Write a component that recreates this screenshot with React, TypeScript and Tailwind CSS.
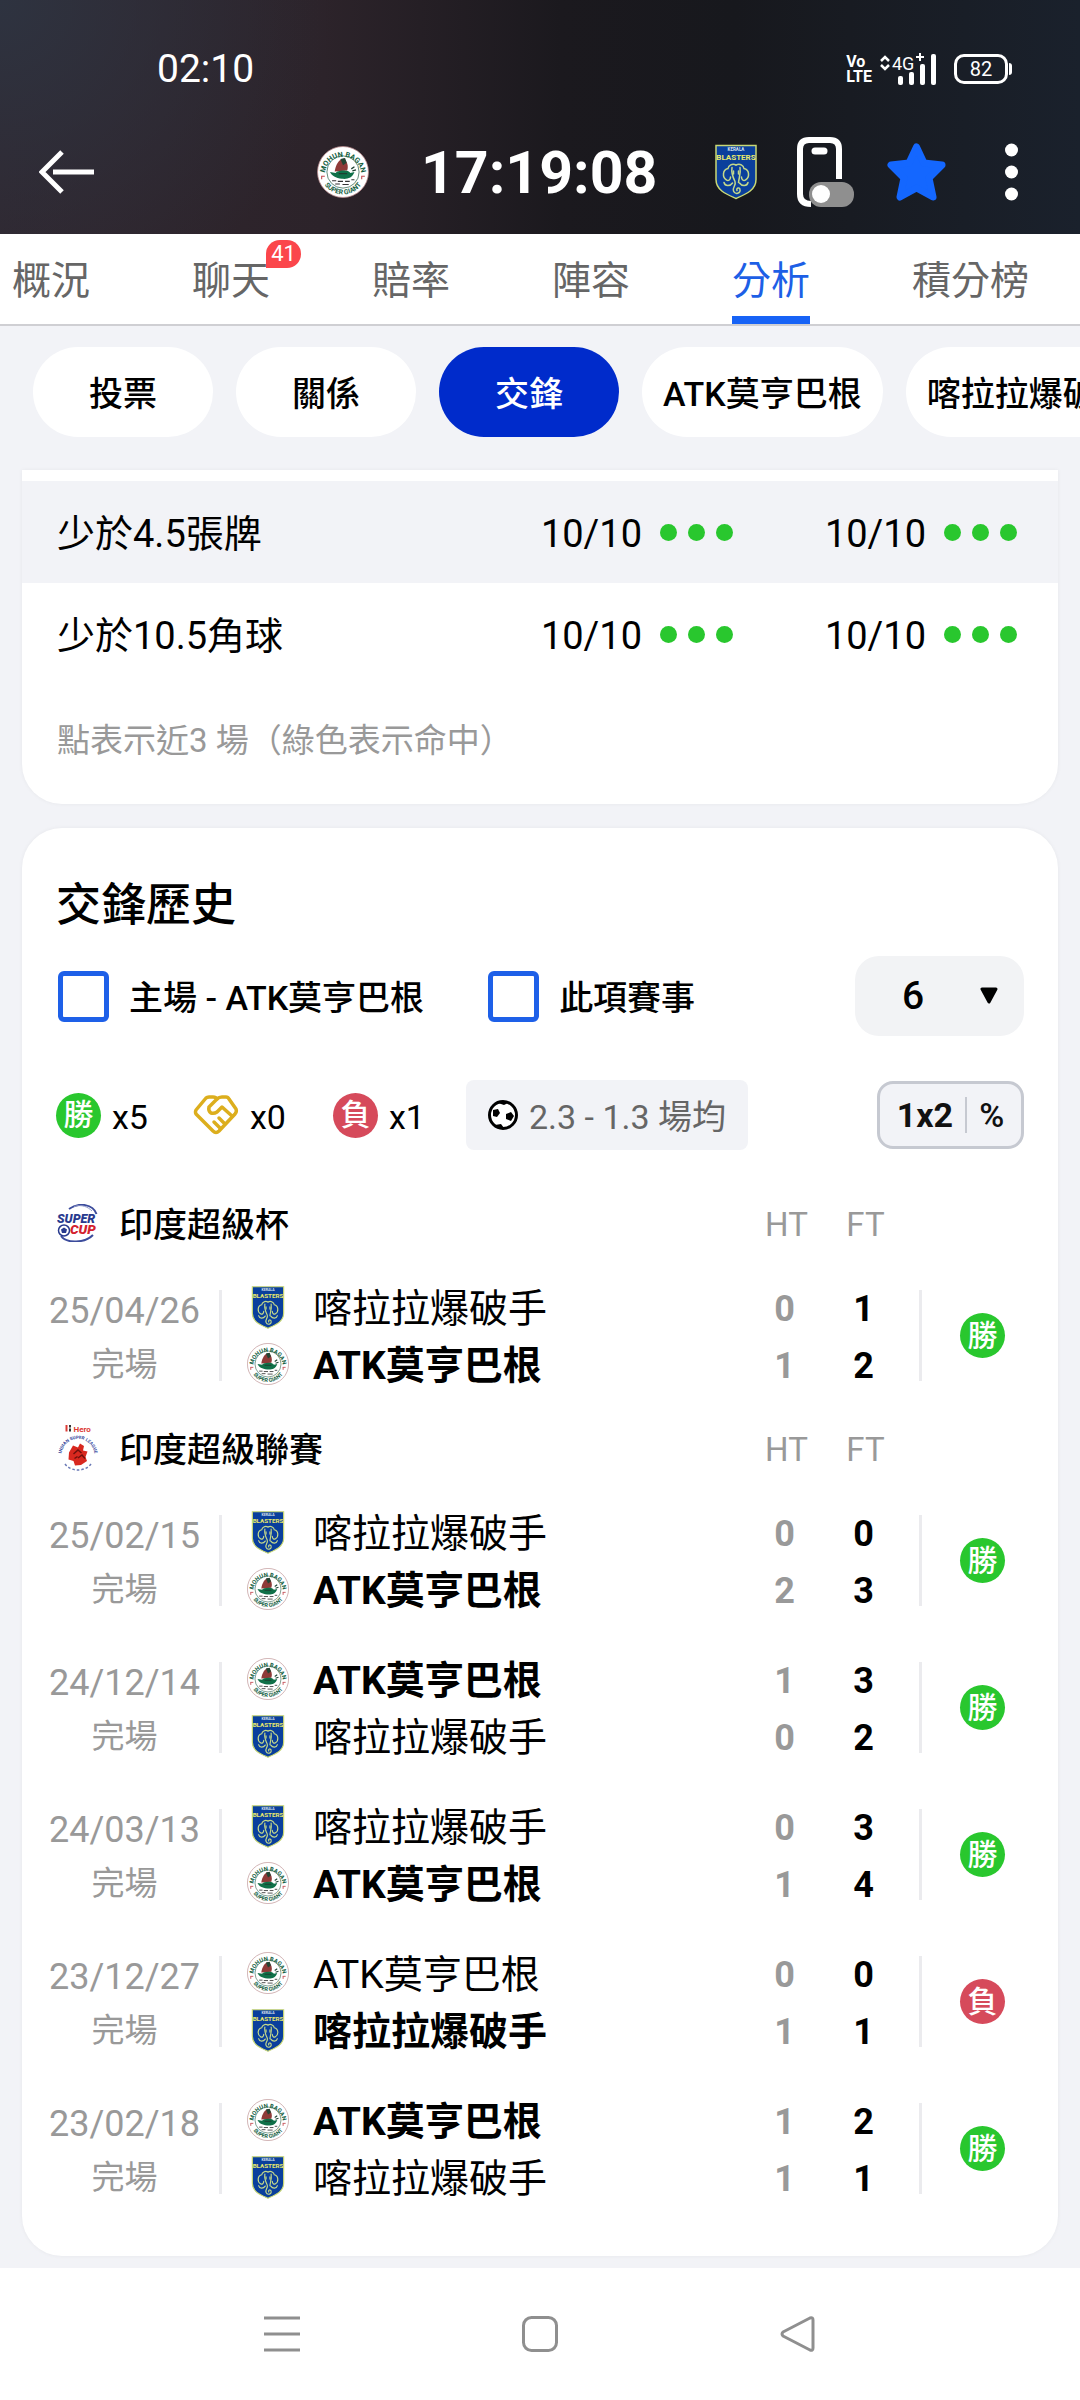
import React, { useState } from "react";

type TTeam = "kerala" | "mohun";

type TSide = { team: TTeam; ht: number; ft: number; winner?: boolean };

type TMatch = { date: string; sides: [TSide, TSide]; result: "win" | "loss" };

const teamNames = { kerala: "喀拉拉爆破手", mohun: "ATK莫亨巴根" };

const tabs = [
  { label: "概況" },
  { label: "聊天", badge: 41 },
  { label: "賠率" },
  { label: "陣容" },
  { label: "分析" },
  { label: "積分榜" },
];

const filters = ["投票", "關係", "交鋒", "ATK莫亨巴根", "喀拉拉爆破手"];

const stats = ["少於4.5張牌", "少於10.5角球"];

const superCup: TMatch[] = [
  {
    date: "25/04/26",
    sides: [
      { team: "kerala", ht: 0, ft: 1 },
      { team: "mohun", ht: 1, ft: 2, winner: true },
    ],
    result: "win",
  },
];

const superLeague: TMatch[] = [
  {
    date: "25/02/15",
    sides: [
      { team: "kerala", ht: 0, ft: 0 },
      { team: "mohun", ht: 2, ft: 3, winner: true },
    ],
    result: "win",
  },
  {
    date: "24/12/14",
    sides: [
      { team: "mohun", ht: 1, ft: 3, winner: true },
      { team: "kerala", ht: 0, ft: 2 },
    ],
    result: "win",
  },
  {
    date: "24/03/13",
    sides: [
      { team: "kerala", ht: 0, ft: 3 },
      { team: "mohun", ht: 1, ft: 4, winner: true },
    ],
    result: "win",
  },
  {
    date: "23/12/27",
    sides: [
      { team: "mohun", ht: 0, ft: 0 },
      { team: "kerala", ht: 1, ft: 1, winner: true },
    ],
    result: "loss",
  },
  {
    date: "23/02/18",
    sides: [
      { team: "mohun", ht: 1, ft: 2, winner: true },
      { team: "kerala", ht: 1, ft: 1 },
    ],
    result: "win",
  },
];

function MohunCrest({ className }: { className: string }) {
  return (
    <svg viewBox="0 0 100 100" className={className} aria-hidden="true">
      <defs>
        <path id="mohun-top" d="M15 56 A35 35 0 1 1 85 56" />
        <path id="mohun-bottom" d="M7 50 A43 43 0 0 0 93 50" />
      </defs>
      <circle cx="50" cy="50" r="49" fill="#fff" stroke="#b98a8d" strokeWidth="1.5" />
      <circle cx="50" cy="50" r="31" fill="#fff" stroke="#3b6b55" strokeWidth="1.5" />
      <g fill="#14603f" fontFamily="Roboto, sans-serif" fontWeight="bold" fontSize="14" textAnchor="middle">
        <text>
          <textPath href="#mohun-top" startOffset="50%">MOHUN BAGAN</textPath>
        </text>
        <text fontSize="13">
          <textPath href="#mohun-bottom" startOffset="50%">SUPER GIANT</textPath>
        </text>
      </g>
      <path d="M8 58 h7 M9 58 v6 M85 58 h7 M86 58 v6" stroke="#c2454d" strokeWidth="2" />
      <path d="M34 49 C36 36 42 25 52 24 C58 30 61 38 58 47 Z" fill="#8f3a38" />
      <path d="M45 25 L54 23 L57 32 L50 37 Z" fill="#234433" />
      <path d="M36 52 C38 46 62 45 64 52 L72 50 C68 62 58 64 48 63 C36 62 28 57 25 50 Z" fill="#0f7048" />
      <path d="M42 53 h16 M66 44 l6 -4 M68 48 l7 -2" stroke="#1c3f30" strokeWidth="2.5" />
      <path d="M29 67 h8 M40 68 h10 M54 68 h9 M66 65 h6 M35 73 h9 M49 74 h12" stroke="#333" strokeWidth="2" />
    </svg>
  );
}

function KeralaCrest({ className }: { className: string }) {
  return (
    <svg viewBox="0 0 84 110" className={className} aria-hidden="true">
      <path d="M2 2 H82 V70 C82 92 60 100 42 108 C24 100 2 92 2 70 Z" fill="#0a3f9c" stroke="#c9d875" strokeWidth="3" />
      <g fontFamily="Roboto, sans-serif" fontWeight="bold" textAnchor="middle">
        <text x="42" y="13" fontSize="9" fill="#d8e2ee">KERALA</text>
        <text x="42" y="30" fontSize="16" fill="#e9e96a">BLASTERS</text>
      </g>
      <g fill="none" stroke="#c5d98a" strokeWidth="3" strokeLinecap="round">
        <path d="M42 41 C34 37 27 42 26 48 C15 50 14 66 23 71 C27 74 31 70 31 65" />
        <path d="M42 41 C50 37 57 42 58 48 C69 50 70 66 61 71 C57 74 53 70 53 65" />
        <path d="M34 46 C32 58 36 66 40 74 C43 82 34 86 37 93 C40 101 52 98 50 90 C49 85 42 86 44 92" />
        <path d="M50 46 C52 58 48 66 47 76" />
        <path d="M18 76 C20 84 30 84 35 77 M66 76 C64 84 54 84 49 77" />
        <path d="M37 53 v6 M47 53 v6" />
      </g>
    </svg>
  );
}

function SuperCupLogo() {
  return (
    <svg viewBox="0 0 84 76" className="h-[38px] w-[42px]" aria-hidden="true">
      <path d="M24 10 C44 -4 72 0 79 20" fill="none" stroke="#3c4c9c" strokeWidth="4" />
      <path d="M34 5 C50 0 62 6 70 14" fill="none" stroke="#8d97c8" strokeWidth="2" />
      <path d="M8 64 C20 80 56 78 72 62" fill="none" stroke="#3c4c9c" strokeWidth="4" />
      <g fontFamily="Roboto, sans-serif" fontWeight="900" fontStyle="italic">
        <text x="0" y="37" fontSize="25" fill="#283a8e">SUPER</text>
        <text x="26" y="60" fontSize="27" fill="#d3222e">CUP</text>
      </g>
      <circle cx="14" cy="53" r="11" fill="#fff" stroke="#283a8e" strokeWidth="3" />
      <path d="M14 47 l6 4 l-2 7 h-8 l-2 -7 Z" fill="#283a8e" />
    </svg>
  );
}

function SuperLeagueLogo() {
  return (
    <svg viewBox="0 0 84 96" className="h-12 w-[42px]" aria-hidden="true">
      <defs>
        <path id="isl-top" d="M11 74 A33 33 0 1 1 73 74" />
      </defs>
      <path d="M26 2 v5 M26 9 v6" stroke="#333" strokeWidth="4" />
      <path d="M19 2 v13" stroke="#dc3a34" strokeWidth="4" />
      <g fontFamily="Roboto, sans-serif" fontWeight="bold">
        <text x="33" y="15" fontSize="16" fill="#dc3a34">Hero</text>
        <text fontSize="9" fill="#34479c" textAnchor="middle">
          <textPath href="#isl-top" startOffset="50%">INDIAN SUPER LEAGUE</textPath>
        </text>
      </g>
      <path d="M24 57 l8 -14 l10 4 l4 -8 l8 5 l-2 9 l9 2 l-4 11 l3 8 l-12 8 l-12 1 l-3 -9 l-10 -3 Z" fill="#d8281f" />
      <path d="M33 60 l9 -8 l7 6 M42 68 l8 -6 l6 7 M35 69 l6 -4" fill="none" stroke="#6f100c" strokeWidth="3" />
      <path d="M16 80 C28 96 56 96 68 80" fill="none" stroke="#6878b5" strokeWidth="3" strokeDasharray="5 4" />
    </svg>
  );
}

function Handshake() {
  return (
    <svg
      viewBox="0 0 46 42"
      className="h-[42px] w-[46px]"
      fill="none"
      stroke="#dcae1d"
      strokeWidth="3.5"
      strokeLinecap="round"
      strokeLinejoin="round"
      aria-hidden="true"
    >
      <path d="M3 16 L13 4 Q14 3 16 3 H20 Q23 3 24 5 Q26 3 29 3 H33 Q35 3 36 5 L43 15 Q44 18 42 20 L26 37 Q23 40 20 37 L3 20 Q2 18 3 16 Z" />
      <path d="M24 5 L16 13 Q15 17 18 19 Q21 20 24 18 L29 13 L39 22" />
      <path d="M26 24 L32 30 M21 28 L27 34" />
    </svg>
  );
}

function Crest({ team }: { team: TTeam }) {
  return team === "kerala" ? (
    <KeralaCrest className="h-[43px] w-[42px] shrink-0" />
  ) : (
    <MohunCrest className="size-[42px] shrink-0" />
  );
}

function ResultBadge({ result }: { result: "win" | "loss" }) {
  return (
    <span
      className={`flex size-[45px] shrink-0 items-center justify-center rounded-full text-[30px] leading-none font-medium text-white ${
        result === "win" ? "bg-[#29c72e]" : "bg-[#d64a5b]"
      }`}
    >
      {result === "win" ? "勝" : "負"}
    </span>
  );
}

function StatusBar() {
  return (
    <div className="flex h-[110px] items-center justify-between pt-7 pr-[68px] pl-[157px]">
      <span className="text-[39px] leading-none">02:10</span>
      <div className="flex items-center">
        <span className="flex flex-col text-[16px] leading-[15px] font-bold">
          <span>Vo</span>
          <span>LTE</span>
        </span>
        <svg viewBox="0 0 56 34" className="ml-2 h-[34px] w-14" fill="#fff" aria-hidden="true">
          <path d="M1 9 l4 -4 l4 4 M1 13 l4 4 l4 -4" fill="none" stroke="#fff" strokeWidth="2.5" />
          <text x="12" y="18" fontSize="18" fontFamily="Roboto, sans-serif">4G</text>
          <path d="M36 5 h8 M40 1 v8" stroke="#fff" strokeWidth="2" />
          <rect x="18" y="24" width="5" height="9" rx="2" />
          <rect x="29" y="20" width="5" height="13" rx="2" />
          <rect x="40" y="12" width="5" height="21" rx="2" />
          <rect x="51" y="2" width="5" height="31" rx="2" />
        </svg>
        <span className="ml-[18px] flex h-[30px] w-[54px] items-center justify-center rounded-[10px] border-[3px] border-white text-xl leading-none">
          82
        </span>
        <span className="ml-px h-3 w-[3px] rounded-r bg-white" />
      </div>
    </div>
  );
}

function MatchBar() {
  return (
    <div className="flex h-[124px] items-center justify-end pr-[62px] pl-[39px]">
      <button type="button" aria-label="返回" className="mr-auto">
        <svg viewBox="0 0 55 44" className="h-11 w-[55px]" fill="none" stroke="#fff" strokeWidth="5" aria-hidden="true">
          <path d="M23 2 L3 22 L23 42" />
          <path d="M14 22 H55" />
        </svg>
      </button>
      <MohunCrest className="size-[52px]" />
      <h1 className="mr-[58px] ml-[52px] w-[236px] text-center text-[59px] leading-none font-bold">17:19:08</h1>
      <KeralaCrest className="mr-10 h-14 w-[42px]" />
      <button type="button" aria-label="畫面常亮" className="mr-[33px]">
        <svg viewBox="0 0 57 70" className="h-[70px] w-[57px]" fill="none" aria-hidden="true">
          <path d="M42 42 V12 Q42 3 33 3 H12 Q3 3 3 12 V57 Q3 67 14 67" stroke="#fff" strokeWidth="6" />
          <path d="M18 14 H27" stroke="#fff" strokeWidth="7" strokeLinecap="round" />
          <rect x="12" y="45" width="45" height="25" rx="12" fill="#8f8f8f" />
          <circle cx="24" cy="57" r="9" fill="#fff" />
        </svg>
      </button>
      <button type="button" aria-label="收藏" className="mr-[59px]">
        <svg viewBox="0 0 59 58" className="h-[58px] w-[59px]" aria-hidden="true">
          <path
            d="M29.500 4 L37 20 L55 22 L42 35 L46 54 L29.500 45 L13 54 L17 35 L4 22 L22 20 Z"
            fill="#1467ff"
            stroke="#1467ff"
            strokeWidth="7"
            strokeLinejoin="round"
          />
        </svg>
      </button>
      <button type="button" aria-label="更多">
        <svg viewBox="0 0 13 58" className="h-[58px] w-[13px]" fill="#fff" aria-hidden="true">
          <circle cx="6.500" cy="7" r="6.500" />
          <circle cx="6.500" cy="29" r="6.500" />
          <circle cx="6.500" cy="51" r="6.500" />
        </svg>
      </button>
    </div>
  );
}

function StatValue() {
  return (
    <div className="flex items-center justify-end gap-[18px]">
      <span className="pt-1">10/10</span>
      <span className="flex gap-[11px]">
        <span className="size-[17px] rounded-full bg-[#29c72e]" />
        <span className="size-[17px] rounded-full bg-[#29c72e]" />
        <span className="size-[17px] rounded-full bg-[#29c72e]" />
      </span>
    </div>
  );
}

function MatchRow({ match }: { match: TMatch }) {
  return (
    <tr className="h-[147px]">
      <td>
        <div className="flex h-[91px] flex-col items-center justify-center border-r-[3px] border-[#ebebee] pt-1 pl-2 leading-[54px] text-[#999]">
          <span className="text-4xl leading-[54px]">{match.date}</span>
          <span className="text-[33px]">完場</span>
        </div>
      </td>
      <td className="pl-[25px]">
        {match.sides.map((side) => (
          <div key={side.team} className="flex h-[57px] items-center gap-6">
            <Crest team={side.team} />
            <span className={`pt-1 text-[39px] leading-none ${side.winner ? "font-bold" : ""}`}>
              {teamNames[side.team]}
            </span>
          </div>
        ))}
      </td>
      <td className="pt-1 text-center text-4xl font-bold text-[#999]">
        {match.sides.map((side) => (
          <div key={side.team} className="leading-[57px]">{side.ht}</div>
        ))}
      </td>
      <td className="pt-1 text-center text-4xl font-bold">
        {match.sides.map((side) => (
          <div key={side.team} className="leading-[57px]">{side.ft}</div>
        ))}
      </td>
      <td>
        <div className="ml-4 flex h-[91px] items-center border-l-[3px] border-[#ebebee] pl-[38px]">
          <ResultBadge result={match.result} />
        </div>
      </td>
    </tr>
  );
}

function LeagueTable({ name, logo, matches }: { name: string; logo: React.ReactNode; matches: TMatch[] }) {
  return (
    <table className="w-full table-fixed">
      <colgroup>
        <col className="w-[200px]" />
        <col />
        <col className="w-[79px]" />
        <col className="w-[79px]" />
        <col className="w-[155px]" />
      </colgroup>
      <thead>
        <tr className="h-[78px]">
          <th colSpan={2} scope="colgroup" className="pl-[35px] text-left font-medium">
            <div className="flex items-center gap-5 text-[34px] leading-none">
              {logo}
              <span className="pt-1">{name}</span>
            </div>
          </th>
          <th scope="col" className="pt-1 pl-1 text-[33px] font-normal text-[#999]">HT</th>
          <th scope="col" className="pt-1 pl-1 text-[33px] font-normal text-[#999]">FT</th>
          <td />
        </tr>
      </thead>
      <tbody>
        {matches.map((match) => (
          <MatchRow key={match.date} match={match} />
        ))}
      </tbody>
    </table>
  );
}

function App() {
  const [tab, setTab] = useState("分析");
  const [filter, setFilter] = useState("交鋒");
  const [limit, setLimit] = useState("6");

  return (
    <div className="flex min-h-screen flex-col overflow-x-hidden bg-[#f2f3f7] font-['Roboto','Noto_Sans_CJK_TC',sans-serif] text-black">
      <header className="bg-[linear-gradient(90deg,#30262e_0%,#2c232a_30%,#1b191e_52%,#17181d_68%,#1a212c_100%)] text-white">
        <div className="bg-[radial-gradient(circle_at_top_left,#2e3340_0%,transparent_30%)]">
          <StatusBar />
          <MatchBar />
        </div>
      </header>

      <nav className="flex h-23 gap-[102px] border-b-2 border-[#cfcfd3] bg-white pl-3">
        {tabs.map(({ label, badge }) => (
          <button
            key={label}
            type="button"
            onClick={() => setTab(label)}
            className={`relative shrink-0 border-b-8 pt-3 text-[39px] leading-none ${
              tab === label ? "border-[#1763f6] text-[#1d5fe6]" : "border-transparent text-[#666]"
            }`}
          >
            {label}
            {badge && (
              <span className="absolute top-1.5 left-[74px] flex h-7 w-[35px] items-center justify-center rounded-full rounded-bl-none bg-[#fb464b] text-[22px] text-white">
                {badge}
              </span>
            )}
          </button>
        ))}
      </nav>

      <div className="flex gap-[23px] overflow-hidden py-[21px] pl-[33px]">
        {filters.map((label) => (
          <button
            key={label}
            type="button"
            onClick={() => setFilter(label)}
            className={`h-[90px] min-w-[180px] shrink-0 rounded-full px-[21px] pt-1 text-[34px] leading-none font-medium ${
              filter === label ? "bg-[#002bcb] text-white" : "bg-white"
            }`}
          >
            {label}
          </button>
        ))}
      </div>

      <main className="flex flex-col gap-6 px-[22px] pt-3 pb-3">
        <section className="rounded-b-[40px] bg-white pt-[11px] pb-9 shadow-[0_0_4px_rgba(0,0,0,0.05)]">
          <table className="w-full">
            <tbody className="text-[38px] leading-none">
              {stats.map((label) => (
                <tr key={label} className="h-[102px] odd:bg-[#f2f3f7]">
                  <th scope="row" className="pt-1 pl-[35px] text-left font-normal">{label}</th>
                  <td className="w-[284px] pr-[41px]">
                    <StatValue />
                  </td>
                  <td className="w-[284px] pr-[41px]">
                    <StatValue />
                  </td>
                </tr>
              ))}
            </tbody>
          </table>
          <p className="mt-7 pl-[35px] text-[33px] leading-[55px] text-[#999]">點表示近3 場（綠色表示命中）</p>
        </section>

        <section className="rounded-[40px] bg-white pt-12 pb-[34px] shadow-[0_0_4px_rgba(0,0,0,0.05)]">
          <h2 className="pl-[34px] text-[45px] leading-[60px] font-medium">交鋒歷史</h2>

          <div className="mt-5 flex h-20 items-center pr-[34px] pl-9 text-[34px] leading-none font-medium">
            <label className="flex items-center gap-5">
              <input type="checkbox" className="size-[51px] appearance-none rounded-md border-[5px] border-[#1e60e8] checked:bg-[#1e60e8]" />
              <span className="pt-1">主場 - ATK莫亨巴根</span>
            </label>
            <label className="ml-16 flex items-center gap-5">
              <input type="checkbox" className="size-[51px] appearance-none rounded-md border-[5px] border-[#1e60e8] checked:bg-[#1e60e8]" />
              <span className="pt-1">此項賽事</span>
            </label>
            <div className="relative ml-auto">
              <select
                aria-label="場數"
                value={limit}
                onChange={(e) => setLimit(e.target.value)}
                className="h-20 w-[169px] appearance-none rounded-3xl bg-[#f2f3f5] pl-[47px] text-[39px] font-medium"
              >
                <option>6</option>
                <option>10</option>
                <option>20</option>
              </select>
              <svg viewBox="0 0 18 17" className="pointer-events-none absolute top-[31px] right-[26px] h-[17px] w-[18px]" aria-hidden="true">
                <path d="M2 2 H16 L9 15 Z" stroke="#000" strokeWidth="3" strokeLinejoin="round" />
              </svg>
            </div>
          </div>

          <div className="mt-11 mb-[34px] flex h-[70px] items-center pr-[34px] pl-[34px] text-[34px] leading-none">
            <div className="flex w-[137px] items-center gap-[11px]">
              <ResultBadge result="win" />
              <span className="pt-1">x5</span>
            </div>
            <div className="flex w-[140px] items-center gap-[11px]">
              <Handshake />
              <span className="pt-1">x0</span>
            </div>
            <div className="flex w-[133px] items-center gap-[11px]">
              <ResultBadge result="loss" />
              <span className="pt-1">x1</span>
            </div>
            <div className="flex h-[70px] items-center gap-[11px] rounded-lg bg-[#f2f3f7] px-[22px] text-[#666]">
              <svg viewBox="0 0 30 30" className="size-[30px]" aria-hidden="true">
                <circle cx="15" cy="15" r="13.500" fill="#fff" stroke="#000" strokeWidth="3" />
                <path d="M5 10 L10 9 L12 13 L9 17 L5 16 Z M18 14 L23 12 L26 16 L23 21 L18 19 Z M10 3 Q15 0 20 3 L16 5 Z M7 25 L13 24 L16 28 Q10 29 7 25 Z" />
              </svg>
              <span className="pt-1">2.3 - 1.3 場均</span>
            </div>
            <button
              type="button"
              className="ml-auto flex h-[68px] w-[147px] items-center justify-center gap-3 rounded-2xl border-[3px] border-[#c6c9d1] bg-[#f2f3f7] font-bold text-[#111]"
            >
              1x2
              <span className="h-9 w-0.5 bg-[#c6c9d1]" />
              <span className="font-medium">%</span>
            </button>
          </div>

          <LeagueTable name="印度超級杯" logo={<SuperCupLogo />} matches={superCup} />
          <LeagueTable name="印度超級聯賽" logo={<SuperLeagueLogo />} matches={superLeague} />
        </section>
      </main>

      <footer className="mt-auto flex h-[132px] items-center justify-center gap-[222px] bg-white">
        <button type="button" aria-label="最近">
          <svg viewBox="0 0 36 36" className="size-9" stroke="#8f8f8f" strokeWidth="3" aria-hidden="true">
            <path d="M0 2 H36 M0 18 H36 M0 34 H36" />
          </svg>
        </button>
        <button type="button" aria-label="主畫面">
          <svg viewBox="0 0 36 36" className="size-9" fill="none" stroke="#8f8f8f" strokeWidth="3" aria-hidden="true">
            <rect x="1.500" y="1.500" width="33" height="33" rx="8" />
          </svg>
        </button>
        <button type="button" aria-label="上一頁">
          <svg viewBox="0 0 36 36" className="size-9" fill="none" stroke="#8f8f8f" strokeWidth="3" strokeLinejoin="round" aria-hidden="true">
            <path d="M3 16 L30 2 Q33 1 33 4 V32 Q33 35 30 34 L3 20 Q1 18 3 16 Z" />
          </svg>
        </button>
      </footer>
    </div>
  );
}

export default App;
